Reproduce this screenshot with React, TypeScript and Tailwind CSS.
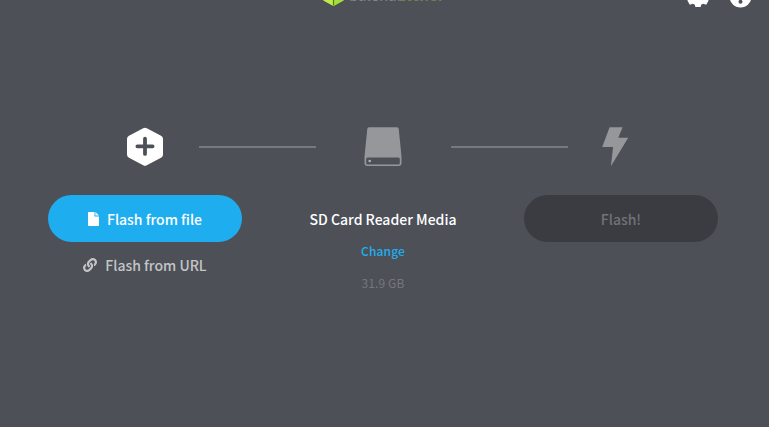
import React from 'react';

function Header() {
  return (
    <header className="relative h-[20px] w-full overflow-hidden">
      <div className="absolute -top-[15px] left-[323px] flex items-start">
        <svg width="21" height="21" viewBox="0 0 21 21">
          <path d="M10.500 0 20.500 5.500v10l-10 5.500-10-5.500v-10z" fill="#a5de37" />
          <path d="M.5 5.500 10.500 11v10l-10-5.500z" fill="#c1e84c" />
          <path d="M20.500 5.500 10.500 11v10l10-5.500z" fill="#a5de37" />
          <path d="M10.500 11v9.500" stroke="#4d7a1c" strokeWidth="1.200" />
        </svg>
        <span className="ml-[5px] mt-[1px] whitespace-nowrap text-[15px] leading-[18px] text-[#82858a]">
          balena<span className="font-bold text-[#6d8154]">Etcher</span>
        </span>
      </div>
      <svg className="absolute left-[686px] -top-[17px]" width="24" height="24" viewBox="0 0 24 24" fill="#fff">
        <path d="M9.600 0h4.800l.7 3.200 2 1.100 3.100-1 2.400 4.200-1.400 2.200v6.200l1.400 1.600-2.400 4.200-2.900-1-2.200 1.100-.5 2.400H9.400l-.5-2.400-2.200-1.100-2.900 1-2.400-4.200 1.400-1.600V9.700L1.400 7.500l2.400-4.200 3.100 1 2-1.100z" />
      </svg>
      <svg className="absolute left-[729px] -top-[15px]" width="23" height="23" viewBox="0 0 23 23">
        <circle cx="11.500" cy="11.500" r="11" fill="#fff" />
        <circle cx="11.500" cy="16.800" r="2" fill="#4d5057" />
        <path d="M11.500 10v4" stroke="#4d5057" strokeWidth="2" />
      </svg>
    </header>
  );
}

function PlusHexagon() {
  return (
    <svg width="40" height="40" viewBox="0 0 40 40">
      <path
        d="M18.200 1.200q1.800-1 3.600 0L36 8.700q2 1.100 2 3.300v15.400q0 2.200-2 3.300l-14.200 7.500q-1.800 1-3.600 0L4 30.700q-2-1.100-2-3.300V12Q2 9.800 4 8.700z"
        fill="#fff"
      />
      <path d="M20 11.700v15.200M12.400 19.300h15.200" stroke="#4d5057" strokeWidth="3.800" strokeLinecap="round" />
    </svg>
  );
}

function DriveIcon() {
  return (
    <svg width="40" height="40" viewBox="0 0 40 40">
      <path
        fillRule="evenodd"
        d="M6 .2h28q1.500 0 1.700 1.500L38.500 29.500V36q0 3-3 3h-31q-3 0-3-3v-6.500L4.300 1.700Q4.500.2 6 .2zM4.700 30.500q-1.500 0-1.500 1.500v4.100q0 1.500 1.500 1.500h30.600q1.500 0 1.500-1.500V32q0-1.500-1.500-1.500z"
        fill="#96979b"
      />
      <circle cx="6.700" cy="34" r="1.300" fill="#b0b1b4" />
    </svg>
  );
}

function BoltIcon() {
  return (
    <svg width="28" height="40" viewBox="0 0 28 40">
      <path d="M8.600.2h13l-4.300 10.600H27.200L9.900 39.200l2.200-19.300H1.200z" fill="#96979b" />
    </svg>
  );
}

export default function App() {
  return (
    <div className="h-[427px] w-[769px] overflow-hidden bg-[#4d5057] font-['Noto_Sans_CJK_SC',sans-serif]">
      <Header />
      <div className="mt-[107px] flex h-[40px] items-center pl-[125px]">
        <PlusHexagon />
        <div className="ml-[34px] h-[2px] w-[117px] bg-[#77797e]" />
        <div className="ml-[47px] h-10">
          <DriveIcon />
        </div>
        <div className="ml-[48px] h-[2px] w-[117px] bg-[#77797e]" />
        <div className="ml-[33px] h-10">
          <BoltIcon />
        </div>
      </div>
      <main className="mt-[28px] grid grid-cols-[238px_238px_238px] pl-[26px] text-center">
        <section className="flex flex-col items-center">
          <button className="flex h-[47px] w-[194px] items-center justify-center rounded-full bg-[#1eaef0] pt-px text-[14px] font-medium text-white">
            <svg className="mr-[8px]" width="11" height="14" viewBox="0 0 11 14" fill="#fff">
              <path d="M.8 0h5.700v3.900q0 .7.700.7H11v8.600q0 .8-.8.800H.8q-.8 0-.8-.8V.8Q0 0 .8 0zM7.400 0 11 3.600H7.400z" />
            </svg>
            Flash from file
          </button>
          <button className="mt-[11px] flex h-6 items-center justify-center text-[14px] font-medium text-[#c4c5c7]">
            <svg className="mr-[8px]" width="14" height="14" viewBox="0 0 512 512" fill="currentColor">
              <path d="M326.612 185.391c59.747 59.809 58.927 155.698.36 214.590-.11.120-.24.250-.36.370l-67.200 67.200c-59.270 59.270-155.699 59.262-214.960 0-59.270-59.260-59.270-155.700 0-214.960l37.106-37.106c9.840-9.840 26.786-3.300 27.294 10.606.648 17.722 3.826 35.527 9.690 52.721 1.986 5.822.567 12.262-3.783 16.612l-13.087 13.087c-28.026 28.026-28.905 73.660-1.155 101.960 28.024 28.579 74.086 28.749 102.325.510l67.200-67.190c28.191-28.191 28.073-73.757 0-101.830-3.701-3.694-7.429-6.564-10.341-8.569a16.037 16.037 0 0 1-6.947-12.606c-.396-10.567 3.348-21.456 11.698-29.806l21.054-21.055c5.521-5.521 14.182-6.199 20.584-1.731a152.482 152.482 0 0 1 20.522 17.197zM467.547 44.449c-59.261-59.262-155.690-59.270-214.960 0l-67.200 67.200c-.12.120-.25.250-.36.370-58.566 58.892-59.387 154.781.36 214.590a152.454 152.454 0 0 0 20.521 17.196c6.402 4.468 15.064 3.789 20.584-1.731l21.054-21.055c8.350-8.350 12.094-19.239 11.698-29.806a16.037 16.037 0 0 0-6.947-12.606c-2.912-2.005-6.640-4.875-10.341-8.569-28.073-28.073-28.191-73.639 0-101.830l67.200-67.190c28.239-28.239 74.300-28.069 102.325.510 27.750 28.300 26.872 73.934-1.155 101.960l-13.087 13.087c-4.350 4.350-5.769 10.790-3.783 16.612 5.864 17.194 9.042 34.999 9.690 52.721.509 13.906 17.454 20.446 27.294 10.606l37.106-37.106c59.271-59.259 59.271-155.699.001-214.959z" />
            </svg>
            Flash from URL
          </button>
        </section>
        <section className="flex flex-col items-center">
          <div className="h-[47px] text-[14px] font-medium leading-[49px] text-white">SD Card Reader Media</div>
          <button className="h-[18px] text-[12px] font-medium leading-[18px] tracking-[0.15px] text-[#1eaef0]">
            Change
          </button>
          <div className="mt-[14px] h-[18px] text-[12px] leading-[18px] tracking-[0.1px] text-[#75777b]">31.9 GB</div>
        </section>
        <section className="flex flex-col items-center">
          <button className="h-[47px] w-[194px] rounded-full bg-[#3a3c41] pt-px text-[14px] font-medium text-[#717377]">
            Flash!
          </button>
        </section>
      </main>
    </div>
  );
}
